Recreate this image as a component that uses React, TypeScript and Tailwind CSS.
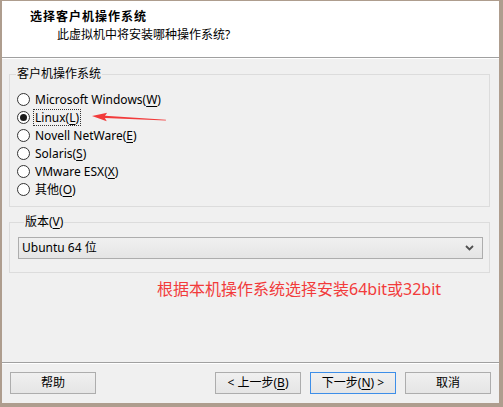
import React from 'react';

const ui = { fontFamily: '"Noto Sans", "Noto Sans CJK SC", sans-serif' };

const options = [
  { label: 'Microsoft Windows', key: 'W' },
  { label: 'Linux', key: 'L' },
  { label: 'Novell NetWare', key: 'E' },
  { label: 'Solaris', key: 'S' },
  { label: 'VMware ESX', key: 'X' },
  { label: '其他', key: 'O' },
];

function Radio({ checked }: { checked: boolean }) {
  return (
    <span className="flex h-[13px] w-[13px] shrink-0 items-center justify-center rounded-full border border-[#333333] bg-white">
      {checked && <span className="h-[7px] w-[7px] rounded-full bg-[#1a1a1a]" />}
    </span>
  );
}

function RedArrow() {
  return (
    <svg
      className="pointer-events-none absolute left-[82px] top-[3px]"
      width="76"
      height="12"
      viewBox="0 0 76 12"
    >
      <g transform="rotate(2.7 0 5)">
        <path d="M0 5 L15 1 L13 4.2 L74 5.3 L74 6 L13 6.4 L15 9.5 Z" fill="#f23b3b" />
      </g>
    </svg>
  );
}

function Button({ children, focused }: { children: React.ReactNode; focused?: boolean }) {
  return (
    <button
      className={
        'flex h-[22px] w-[86px] items-center justify-center bg-gradient-to-b from-[#f0f0f0] to-[#e5e5e5] text-[12px] text-black ' +
        (focused ? 'border border-[#3d8ee8]' : 'border border-[#adadad]')
      }
    >
      {children}
    </button>
  );
}

export default function App() {
  return (
    <div
      className="flex h-[407px] w-[503px] flex-col bg-[#ae9d8e] pb-[4px] pl-[2px] pr-[4px] pt-[1px]"
      style={ui}
    >
      <div className="flex flex-1 flex-col bg-[#f0f0f0]">
        {/* Header */}
        <div className="h-[56px] bg-white pl-[28px] pt-[8px]">
          <div className="text-[12px] font-bold leading-[16px] tracking-[1px] text-black">选择客户机操作系统</div>
          <div className="ml-[27px] mt-[2px] text-[12px] leading-[16px] text-black">此虚拟机中将安装哪种操作系统?</div>
        </div>
        <div className="h-px bg-[#a0a0a0]" />
        <div className="h-px bg-white" />

        {/* Body */}
        <div className="flex flex-1 flex-col">
          <fieldset className="ml-[7px] mt-[7px] w-[481px] border border-[#dcdcdc] pb-[8px] pt-[8px]">
            <legend className="ml-[6px] px-[1px] text-[12px] leading-[16px] text-black">客户机操作系统</legend>
            {options.map((o) => {
              const checked = o.key === 'L';
              return (
                <div key={o.key} className="relative flex h-[18px] items-center gap-[3px] pl-[7px] text-[12px] text-black">
                  <Radio checked={checked} />
                  <span className={checked ? 'border border-dotted border-[#333] px-[1px] leading-[15px]' : 'px-[2px] leading-[17px]'}>
                    {o.label}(<span className="underline underline-offset-2">{o.key}</span>)
                  </span>
                  {checked && <RedArrow />}
                </div>
              );
            })}
          </fieldset>

          <fieldset className="ml-[7px] mt-[7px] w-[481px] border border-[#dcdcdc] pb-[13px] pl-[8px] pr-[6px] pt-[7px]">
            <legend className="ml-[6px] px-[1px] text-[12px] leading-[16px] text-black">
              版本(<span className="underline underline-offset-2">V</span>)
            </legend>
            <div className="flex h-[22px] items-center justify-between border border-[#adadad] bg-gradient-to-b from-[#f0f0f0] to-[#e5e5e5] pl-[3px] pr-[8px] text-[12px] text-black">
              <span>Ubuntu 64 位</span>
              <svg width="9" height="6" viewBox="0 0 9 6">
                <path d="M1 1 L4.5 4.5 L8 1" fill="none" stroke="#505050" strokeWidth="1.8" />
              </svg>
            </div>
          </fieldset>

          <div className="ml-[155px] mt-[6px] text-[16px] leading-[20px] text-[#f23b3b]">
            根据本机操作系统选择安装64bit或32bit
          </div>
        </div>

        {/* Footer */}
        <div className="h-px bg-[#a0a0a0]" />
        <div className="h-px bg-white" />
        <div className="flex items-center justify-between px-[8px] pb-[9px] pt-[8px]">
          <Button>帮助</Button>
          <div className="flex gap-[9px]">
            <Button>
              &lt; 上一步(<span className="underline underline-offset-2">B</span>)
            </Button>
            <Button focused>
              下一步(<span className="underline underline-offset-2">N</span>) &gt;
            </Button>
            <Button>取消</Button>
          </div>
        </div>
      </div>
    </div>
  );
}
